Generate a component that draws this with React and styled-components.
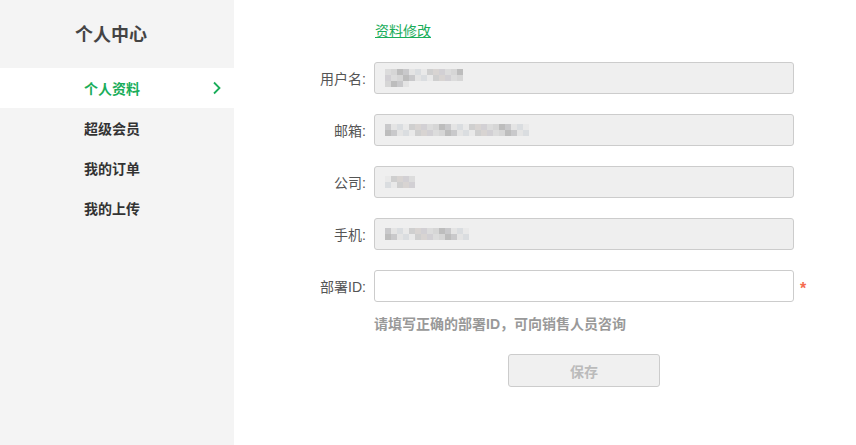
import React from 'react';
import styled, { createGlobalStyle } from 'styled-components';

const GlobalStyle = createGlobalStyle`
  html, body {
    margin: 0;
    padding: 0;
    background: #fff;
    font-family: "Liberation Sans", "Noto Sans CJK SC", sans-serif;
  }
`;

const menu = ['个人资料', '超级会员', '我的订单', '我的上传'];

const fields = [
  { label: '用户名:', mask: [13, 13, 4], disabled: true },
  { label: '邮箱:', mask: [24, 24], disabled: true },
  { label: '公司:', mask: [5, 5], disabled: true },
  { label: '手机:', mask: [14, 14], disabled: true },
  { label: '部署ID:', required: true },
];

const greys = ['#d6d6d6', '#e4e4e4', '#cfcfcf', '#dcdcdc', '#c9c9cb', '#e9e9e9', '#d2d0d4', '#bdbdbd', '#dadde0', '#d8d4d2'];

export default function App() {
  return (
    <>
      <GlobalStyle />
      <Page>
        <Sidebar>
          <SideTitle>个人中心</SideTitle>
          {menu.map((m, i) => (
            <MenuItem key={m} active={i === 0}>
              {m}
              {i === 0 && (
                <svg width="10" height="14" viewBox="0 0 10 14">
                  <path d="M2 1.5 L7.5 7 L2 12.5" fill="none" stroke="#1aad5a" strokeWidth="1.8" />
                </svg>
              )}
            </MenuItem>
          ))}
        </Sidebar>
        <Main>
          <EditLink>资料修改</EditLink>
          {fields.map((f) => (
            <Row key={f.label}>
              <Label>{f.label}</Label>
              <Field disabled={f.disabled}>
                {f.mask && (
                  <Mask>
                    {f.mask.map((n, r) => (
                      <MaskRow key={r}>
                        {Array.from({ length: n }).map((_, c) => (
                          <Pixel key={c} style={{ background: greys[(c * 7 + r * 3 + n) % greys.length] }} />
                        ))}
                      </MaskRow>
                    ))}
                  </Mask>
                )}
              </Field>
              {f.required && <Star>*</Star>}
            </Row>
          ))}
          <Hint>请填写正确的部署ID，可向销售人员咨询</Hint>
          <SaveButton>保存</SaveButton>
        </Main>
      </Page>
    </>
  );
}

const Page = styled.div`
  display: flex;
  height: 445px;
`;

const Sidebar = styled.div`
  width: 234px;
  flex-shrink: 0;
  background: #f4f4f4;
`;

const SideTitle = styled.div`
  height: 68px;
  line-height: 70px;
  text-align: center;
  font-size: 18px;
  font-weight: bold;
  color: #444;
  padding-right: 12px;
  box-sizing: border-box;
`;

const MenuItem = styled.div`
  height: 40px;
  display: flex;
  align-items: center;
  justify-content: space-between;
  padding: 0 12px 0 84px;
  font-size: 14px;
  font-weight: bold;
  color: ${(p) => (p.active ? '#1aad5a' : '#333')};
  background: ${(p) => (p.active ? '#fff' : 'transparent')};
`;

const Main = styled.div`
  flex: 1;
  padding-top: 21px;
  display: flex;
  flex-direction: column;
`;

const EditLink = styled.a`
  margin-left: 141px;
  font-size: 14px;
  color: #1aad5a;
  text-decoration: underline;
  line-height: 20px;
  margin-bottom: 21px;
  align-self: flex-start;
`;

const Row = styled.div`
  display: flex;
  align-items: center;
  height: 32px;
  margin-bottom: 20px;
`;

const Label = styled.div`
  width: 132px;
  text-align: right;
  padding-right: 8px;
  font-size: 14px;
  color: #555;
`;

const Field = styled.div`
  width: 408px;
  height: 30px;
  border: 1px solid #ccc;
  border-radius: 3px;
  background: ${(p) => (p.disabled ? '#efefef' : '#fff')};
  display: flex;
  align-items: center;
  padding-left: 10px;
`;

const Mask = styled.div`
  display: flex;
  flex-direction: column;
`;

const MaskRow = styled.div`
  display: flex;
`;

const Pixel = styled.span`
  width: 6px;
  height: 6px;
`;

const Star = styled.span`
  margin-left: 6px;
  color: #f56c4f;
  font-size: 16px;
  font-weight: bold;
  padding-top: 6px;
`;

const Hint = styled.div`
  margin: -8px 0 0 140px;
  font-size: 14px;
  font-weight: bold;
  color: #999;
  line-height: 20px;
`;

const SaveButton = styled.button`
  margin: 20px 0 0 274px;
  width: 152px;
  height: 33px;
  border: 1px solid #ccc;
  border-radius: 3px;
  background: #f0f0f0;
  color: #bbb;
  font-size: 14px;
  font-weight: bold;
  font-family: inherit;
`;
